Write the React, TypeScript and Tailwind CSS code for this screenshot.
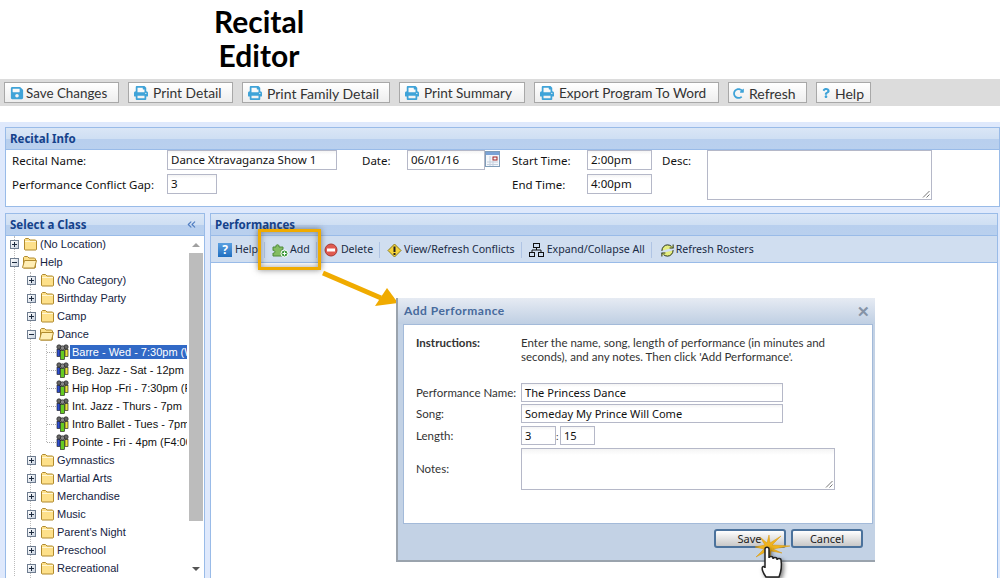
import React from 'react';
import { FaSave, FaPrint, FaRedoAlt, FaQuestion } from 'react-icons/fa';
import { RefreshCw, ChevronsLeft } from 'lucide-react';

const lato = "font-['Lato','Open_Sans',sans-serif]";
const tahoma = "font-['Noto_Sans','Open_Sans',sans-serif]";
const arial = "font-['Liberation_Sans',Arial,sans-serif]";

function Folder({ open }: { open?: boolean }) {
  return (
    <svg width="15" height="14" viewBox="0 0 15 14" className="shrink-0">
      <path d="M1.500 12.500V2.500l1-1h3l1.500 1.500h5.500l1 1v8.500l-.5.500h-11z" fill="#fde08a" stroke="#b08a2e" strokeWidth="1" />
      {open ? (
        <path d="M.5 12.500l2-7h12l-2 7.500h-11.500z" fill="#ffeeb5" stroke="#b08a2e" strokeWidth="1" />
      ) : (
        <path d="M2 4.500h11" stroke="#fff6d5" strokeWidth="1" />
      )}
    </svg>
  );
}

function Expander({ open }: { open?: boolean }) {
  return (
    <span className="w-[9px] h-[9px] shrink-0 border border-[#6f7d90] bg-gradient-to-br from-white to-[#c9d3e0] flex items-center justify-center relative z-10">
      <span className="w-[5px] h-px bg-[#1d2b3f]" />
      {!open && <span className="absolute w-px h-[5px] bg-[#1d2b3f]" />}
    </span>
  );
}

function GroupIcon() {
  return (
    <svg width="13" height="16" viewBox="0 0 13 16" className="shrink-0">
      <circle cx="3" cy="3" r="2.200" fill="#666" stroke="#222" strokeWidth=".7" />
      <circle cx="10" cy="3" r="2.200" fill="#666" stroke="#222" strokeWidth=".7" />
      <circle cx="6.500" cy="4" r="2.200" fill="#888" stroke="#222" strokeWidth=".7" />
      <rect x="1" y="5.500" width="3" height="7" fill="#2f4fd0" stroke="#111" strokeWidth=".6" />
      <rect x="9" y="5.500" width="3" height="7" fill="#e8e23a" stroke="#111" strokeWidth=".6" />
      <rect x="4.500" y="6.500" width="4" height="9" fill="#66cc22" stroke="#111" strokeWidth=".6" />
    </svg>
  );
}

const topButtons = [
  { label: 'Save Changes', icon: <FaSave size={14} />, w: 'w-[115px]', iconBox: 'w-[15px] justify-center mr-[2px]', text: 'text-[13.4px]' },
  { label: 'Print Detail', icon: <FaPrint size={14} />, w: 'w-[105px]', iconBox: 'w-[15px] justify-center mr-[5px]', text: 'text-[13.8px]' },
  { label: 'Print Family Detail', icon: <FaPrint size={14} />, w: 'w-[148px]', iconBox: 'w-[15px] justify-center mr-[5px]', text: 'text-[14px]' },
  { label: 'Print Summary', icon: <FaPrint size={14} />, w: 'w-[126px]', iconBox: 'w-[15px] justify-center mr-[5px]', text: 'text-[13.6px]' },
  { label: 'Export Program To Word', icon: <FaPrint size={14} />, w: 'w-[185px]', iconBox: 'w-[15px] justify-center mr-[5px]', text: 'text-[13.6px]' },
  { label: 'Refresh', icon: <FaRedoAlt size={11} />, w: 'w-[79px]', iconBox: 'w-[15px] justify-start mr-px', text: 'text-[14px]' },
  { label: 'Help', icon: <FaQuestion size={10} />, w: 'w-[55px]', iconBox: 'w-[14px] justify-start', text: 'text-[14px]' },
];

const tree: { label: string; level: number; kind: 'closed' | 'open' | 'leaf'; selected?: boolean }[] = [
  { label: '(No Location)', level: 0, kind: 'closed' },
  { label: 'Help', level: 0, kind: 'open' },
  { label: '(No Category)', level: 1, kind: 'closed' },
  { label: 'Birthday Party', level: 1, kind: 'closed' },
  { label: 'Camp', level: 1, kind: 'closed' },
  { label: 'Dance', level: 1, kind: 'open' },
  { label: 'Barre - Wed - 7:30pm (W', level: 2, kind: 'leaf', selected: true },
  { label: 'Beg. Jazz - Sat - 12pm', level: 2, kind: 'leaf' },
  { label: 'Hip Hop -Fri - 7:30pm (F', level: 2, kind: 'leaf' },
  { label: 'Int. Jazz - Thurs - 7pm', level: 2, kind: 'leaf' },
  { label: 'Intro Ballet - Tues - 7pm', level: 2, kind: 'leaf' },
  { label: 'Pointe - Fri - 4pm (F4:00', level: 2, kind: 'leaf' },
  { label: 'Gymnastics', level: 1, kind: 'closed' },
  { label: 'Martial Arts', level: 1, kind: 'closed' },
  { label: 'Merchandise', level: 1, kind: 'closed' },
  { label: 'Music', level: 1, kind: 'closed' },
  { label: "Parent's Night", level: 1, kind: 'closed' },
  { label: 'Preschool', level: 1, kind: 'closed' },
  { label: 'Recreational', level: 1, kind: 'closed' },
];

function TreeRow({ row }: { row: (typeof tree)[number] }) {
  if (row.kind === 'leaf') {
    return (
      <div className="h-[18px] flex items-center pl-[41px] relative">
        <span className="w-[9px] border-t border-dotted border-[#aaa] shrink-0" />
        <GroupIcon />
        <span className={`ml-[1px] pl-[2px] h-[14px] leading-[14px] whitespace-nowrap text-[11px] w-[117px] overflow-hidden ${row.selected ? 'bg-[#3169c6] text-white' : 'text-[#111]'}`}>
          {row.label}
        </span>
      </div>
    );
  }
  const pad = row.level === 0 ? 'pl-[4px]' : 'pl-[21px]';
  return (
    <div className={`h-[18px] flex items-center ${pad}`}>
      <Expander open={row.kind === 'open'} />
      <span className={row.kind === 'open' ? 'ml-[3px]' : 'ml-[4px]'}>
        <Folder open={row.kind === 'open'} />
      </span>
      <span className={`${row.kind === 'open' ? 'ml-[3px]' : 'ml-[2px]'} text-[11px] text-[#15233f] whitespace-nowrap`}>{row.label}</span>
    </div>
  );
}

function PanelHeader({ title, children }: { title: string; children?: React.ReactNode }) {
  return (
    <div className="h-[22px] border-b border-[#99bbe8] bg-[linear-gradient(#dae6f6_0%,#cfdff3_50%,#b8cfee_52%,#b9d0ee_100%)] flex items-center justify-between pl-1 pr-1">
      <span className={`${tahoma} font-bold text-[11.5px] text-[#15428b] pt-px`}>{title}</span>
      {children}
    </div>
  );
}

function Field({ className, value, text = 'text-[11.5px]' }: { className: string; value: string; text?: string }) {
  return (
    <div className={`${className} ${text} border border-[#b5b8c8] bg-gradient-to-b from-[#f4f4f4] to-white to-[20%] pl-[3px] leading-[18px] text-[#111] ${tahoma} whitespace-nowrap`}>
      {value}
    </div>
  );
}

function Resize() {
  return (
    <svg width="8" height="8" viewBox="0 0 8 8" className="absolute right-px bottom-px">
      <path d="M7.500 1L1 7.500M7.500 4.500L4.500 7.500" stroke="#777" strokeWidth="1" />
    </svg>
  );
}

function Divider() {
  return <span className="w-px h-[16px] bg-[#afc4e4] ml-[6px] mr-[7px] shrink-0" />;
}

export default function App() {
  return (
    <div className="w-[1000px] h-[578px] overflow-hidden relative bg-white">
      <h1 className={`${lato} font-bold text-[30px] leading-[34px] text-black text-center w-[518px] pt-[4px] h-[79px]`}>
        Recital<br />Editor
      </h1>

      <div className="h-[27px] bg-[#dcdcdc] flex items-center pl-1 gap-[9px]">
        {topButtons.map((b) => (
          <button key={b.label} className={`${b.w} h-[21px] border border-[#a8a8a8] bg-gradient-to-b from-white to-[#eeeeee] flex items-center pl-[4px] pt-px ${lato} ${b.text} text-[#333]`}>
            <span className={`text-[#3fa3d8] flex ${b.iconBox}`}>{b.icon}</span>
            <span>{b.label}</span>
          </button>
        ))}
      </div>

      <div className="h-[16px]" />

      <div className="bg-[#dfe9fc] h-[456px] pt-[5px] pl-[5px] pr-[2px]">
        <div className="h-[80px] border border-[#99bbe8] bg-white mr-[-2px]">
          <PanelHeader title="Recital Info" />
          <div className={`grid grid-cols-[155px_195px_45px_105px_75px_75px_45px_225px] grid-rows-[20px_20px] gap-y-1 pl-[6px] text-[11.5px] text-[#111] ${tahoma} leading-[21px]`}>
            <span>Recital Name:</span>
            <Field className="w-[170px] h-[20px]" value="Dance Xtravaganza Show 1" />
            <span>Date:</span>
            <div className="flex h-[20px]">
              <Field className="w-[78px] h-[20px]" value="06/01/16" />
              <svg width="15" height="18" viewBox="0 0 15 18">
                <rect x=".5" y="1.500" width="14" height="15" fill="#f4f7fb" stroke="#7f9db9" />
                <rect x="1" y="2" width="13" height="3" fill="#7aa2d6" />
                <rect x="8" y="7" width="4" height="3" fill="none" stroke="#a02020" />
                <path d="M2 12h11M2 14.500h11M5 6v10M8 11v5" stroke="#c5d0de" />
              </svg>
            </div>
            <span>Start Time:</span>
            <Field className="w-[65px] h-[20px]" value="2:00pm" />
            <span>Desc:</span>
            <div className="relative row-span-2 w-[225px] h-[50px] border border-[#b5b8c8] bg-white">
              <Resize />
            </div>
            <span>Performance Conflict Gap:</span>
            <Field className="w-[50px] h-[20px]" value="3" />
            <span />
            <span />
            <span>End Time:</span>
            <Field className="w-[65px] h-[20px]" value="4:00pm" />
          </div>
        </div>

        <div className="flex gap-[5px] mt-[6px]">
          <div className="w-[200px] h-[400px] border border-[#99bbe8] bg-white">
            <PanelHeader title="Select a Class">
              <ChevronsLeft size={13} color="#4f7cc0" strokeWidth={2} className="mr-[2px]" />
            </PanelHeader>
            <div className={`flex relative ${arial}`}>
              <div className="w-[182px] overflow-hidden -mt-px">
                {tree.map((row) => (
                  <TreeRow key={row.label} row={row} />
                ))}
              </div>
              <div className="w-[15px] h-[343px] flex flex-col items-center pt-[7px]">
                <span className="w-0 h-0 border-x-[4px] border-x-transparent border-b-[4px] border-b-[#a0a0a0]" />
                <span className="w-[14px] h-[268px] bg-[#bcbcbc] mt-[6px]" />
                <span className="w-0 h-0 border-x-[4px] border-x-transparent border-t-[4px] border-t-[#555] mt-[46px]" />
              </div>
              {/* tree guide lines */}
              <span className="absolute left-[8px] top-0 h-[340px] border-l border-dotted border-[#bbb]" />
              <span className="absolute left-[24px] top-[36px] h-[320px] border-l border-dotted border-[#bbb]" />
              <span className="absolute left-[40px] top-[108px] h-[98px] border-l border-dotted border-[#bbb]" />
            </div>
          </div>

          <div className="flex-1 h-[400px] border border-[#99bbe8] bg-white">
            <PanelHeader title="Performances" />
            <div className={`h-[27px] bg-[#d0def0] border-b border-[#99bbe8] flex items-center pl-[7px] pt-[2px] text-[10.6px] text-[#1a2b45] ${tahoma}`}>
              <span className="w-[14px] h-[14px] bg-gradient-to-b from-[#5aa0e0] to-[#1f6fc0] text-white text-[12px] font-bold leading-[14px] text-center mr-[3px]">?</span>
              Help
              <Divider />
              <svg width="17" height="16" viewBox="0 0 17 16" className="mr-px">
                <path d="M1 5h3c-1-3 4-3 3 0h4v2.500c-2.500-1-2.500 3.500 0 2.500V14H1v-3c2.500 1 2.500-3.500 0-2.500z" fill="#83bd62" stroke="#4f8a3a" strokeWidth="1" />
                <circle cx="12.500" cy="11.500" r="3.500" fill="#3e9a3e" stroke="#fff" />
                <path d="M10.500 11.500h4M12.500 9.500v4" stroke="#fff" />
              </svg>
              Add
              <Divider />
              <svg width="14" height="14" viewBox="0 0 14 14" className="mr-[3px]">
                <circle cx="7" cy="7" r="6" fill="#e05a50" stroke="#a83a32" />
                <rect x="3" y="5.500" width="8" height="3" fill="#fff" />
              </svg>
              Delete
              <Divider />
              <svg width="15" height="15" viewBox="0 0 15 15" className="mr-[2px]">
                <path d="M7.500 1L14 7.500 7.500 14 1 7.500z" fill="#f5d33a" stroke="#8a7a1a" />
                <rect x="6.500" y="3.500" width="2" height="5.500" fill="#222" />
                <rect x="6.500" y="10" width="2" height="2" fill="#222" />
              </svg>
              View/Refresh Conflicts
              <Divider />
              <svg width="15" height="14" viewBox="0 0 15 14" fill="none" stroke="#111" className="mr-[3px]">
                <rect x="4.500" y=".5" width="6" height="4" />
                <rect x=".5" y="9.500" width="5" height="4" />
                <rect x="9.500" y="9.500" width="5" height="4" />
                <path d="M7.500 4.500v2.500M3 9.500V7h9v2.500" />
              </svg>
              Expand/Collapse All
              <Divider />
              <RefreshCw size={15} strokeWidth={1.500} color="#1c2610" fill="#e4ee80" className="ml-px mr-px" />
              Refresh Rosters
            </div>
          </div>
        </div>
      </div>

      {/* callout: highlight round the Add button and arrow to the dialog */}
      <div className="absolute left-[258px] top-[229px] w-[63px] h-[41px] border-[3px] border-[#f0ab00] shadow-[0_0_6px_rgba(60,60,60,.6),inset_0_0_6px_rgba(60,60,60,.5)]" />
      <svg width="90" height="50" viewBox="0 0 90 50" className="absolute left-[315px] top-[262px]">
        <path d="M8 11L66 36" stroke="#f0ab00" strokeWidth="5" />
        <path d="M83 41L60 44L72 26z" fill="#f0ab00" />
      </svg>

      {/* dialog */}
      <div className={`absolute left-[396px] top-[298px] w-[479px] h-[264px] bg-[#c3d2e5] border-l-[2px] border-b-[2px] border-[#9aa3ad] ${lato}`}>
        <div className="h-[26px] bg-gradient-to-b from-[#e6ebf3] to-[#bfcfe3] flex items-center justify-between pl-[6px] pr-[5px] text-[12px] font-bold text-[#476a9c]">
          <span className="tracking-[0.5px]">Add Performance</span>
          <span className="text-[#8593a6] text-[15px] leading-none font-bold">✕</span>
        </div>
        <div className="ml-[5px] mr-[2px] h-[200px] bg-white border border-[#a3bad9] pl-[12px] pt-[11px] text-[11.500px] text-[#333]">
          <div className="flex leading-[14px]">
            <span className="w-[105px] font-bold">Instructions:</span>
            <span className="w-[330px]">Enter the name, song, length of performance (in minutes and seconds), and any notes. Then click 'Add Performance'.</span>
          </div>
          <div className="grid grid-cols-[105px_1fr] grid-rows-[21px_22px_22px_42px] mt-[19px] items-start">
            <span className="leading-[19px]">Performance Name:</span>
            <Field className="w-[262px] h-[19px]" text="text-[11.1px]" value="The Princess Dance" />
            <span className="leading-[19px]">Song:</span>
            <Field className="w-[262px] h-[19px]" text="text-[11.1px]" value="Someday My Prince Will Come" />
            <span className="leading-[19px]">Length:</span>
            <div className="flex items-center">
              <Field className="w-[35px] h-[19px]" text="text-[11.1px]" value="3" />
              <span className="w-[4px] text-[10px] leading-none">:</span>
              <Field className="w-[35px] h-[19px]" text="text-[11.1px]" value="15" />
            </div>
            <span className="leading-[42px]">Notes:</span>
            <div className="relative w-[314px] h-[42px] border border-[#b5b8c8] bg-gradient-to-b from-[#f4f4f4] to-white to-[15%]">
              <Resize />
            </div>
          </div>
        </div>
        <div className="flex justify-end gap-[5px] pr-[12px] pt-[5px]">
          <button className="w-[72px] h-[19px] rounded-[3px] border-2 border-[#4b729c] bg-gradient-to-b from-white to-[#c8c8c8] text-[11px] text-[#222] font-['Noto_Sans',sans-serif] leading-none pr-[1px]">Save</button>
          <button className="w-[72px] h-[19px] rounded-[3px] border-2 border-[#4b729c] bg-gradient-to-b from-white to-[#c8c8c8] text-[11px] text-[#222] font-['Noto_Sans',sans-serif] leading-none">Cancel</button>
        </div>
      </div>

      {/* click burst and hand cursor */}
      <svg width="50" height="50" viewBox="0 0 50 50" className="absolute left-[752px] top-[530px]">
        <path d="M13 15L8 7L15 13L17 5L18 13L29 6L20 15L38 16L21 19L30 23L19 21L18 29L15 21L4 27L12 19L3 17z" fill="#f0b41e" stroke="#d8960a" strokeWidth=".5" />
        <path d="M14 47C12 44 9 40 10.500 37c1-1 2.500 0 2.500 1V19c0-2.500 4-2.500 4 0v9c0-2 4-2 4 0v1c0-2 4-2 4 0v1c0-2 4-2 4 0 1 6 0 12-2 17z" fill="#fff" stroke="#222" strokeWidth="1.500" style={{ filter: 'drop-shadow(2px 2px 2px rgba(0,0,0,.5))' }} />
      </svg>
    </div>
  );
}
